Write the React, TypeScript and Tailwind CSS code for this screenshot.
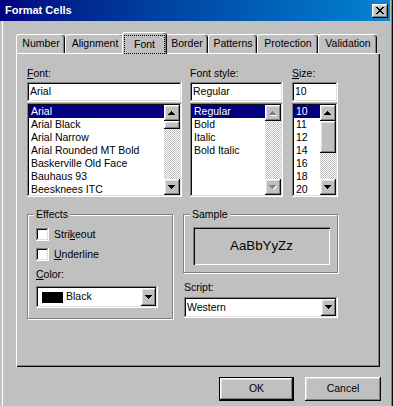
import React from "react";

// Win98 bevels
const RAISED =
  "shadow-[inset_-1px_-1px_#0a0a0a,inset_1px_1px_#ffffff,inset_-2px_-2px_#808080,inset_2px_2px_#dfdfdf]";
const SUNKEN =
  "shadow-[inset_-1px_-1px_#ffffff,inset_1px_1px_#808080,inset_-2px_-2px_#dfdfdf,inset_2px_2px_#0a0a0a]";
const CHECKER =
  "bg-[image:repeating-conic-gradient(#c0c0c0_0%_25%,#ffffff_0%_50%)] bg-[length:2px_2px]";

const UP = "M3 0h1v1h1v1h1v1h1v1H0V3h1V2h1V1h1z";
const DOWN = "M0 0h7v1h-1v1h-1v1h-1v1h-1v-1h-1v-1h-1v-1h-1z";

function Arrow({ down = false, disabled = false }: { down?: boolean; disabled?: boolean }) {
  const d = down ? DOWN : UP;
  return (
    <svg width="8" height="5" viewBox="0 0 8 5" shapeRendering="crispEdges" aria-hidden="true">
      {disabled && <path d={d} fill="#ffffff" transform="translate(1 1)" />}
      <path d={d} fill={disabled ? "#808080" : "#000000"} />
    </svg>
  );
}

/** pixel X used on the caption close button */
const CLOSE_PIXELS: [number, number, number][] = [
  [0, 0, 2], [6, 0, 2],
  [1, 1, 2], [5, 1, 2],
  [2, 2, 4],
  [3, 3, 2],
  [2, 4, 4],
  [1, 5, 2], [5, 5, 2],
  [0, 6, 2], [6, 6, 2],
];

function ScrollBar({ thumb, disabled = false }: { thumb?: string; disabled?: boolean }) {
  return (
    <div className="flex w-[16px] shrink-0 flex-col">
      <div className={`flex h-[16px] shrink-0 items-center justify-center bg-[#c0c0c0] ${RAISED}`}>
        <Arrow disabled={disabled} />
      </div>
      <div className={`flex-1 ${CHECKER}`}>
        {thumb && <div className={`${thumb} bg-[#c0c0c0] ${RAISED}`} />}
      </div>
      <div className={`flex h-[16px] shrink-0 items-center justify-center bg-[#c0c0c0] ${RAISED}`}>
        <Arrow down disabled={disabled} />
      </div>
    </div>
  );
}

function TextBox({ value }: { value: string }) {
  return (
    <div className={`flex h-[20px] items-center bg-white pl-[3px] ${SUNKEN}`}>{value}</div>
  );
}

function ListBox({ items, thumb, disabled }: { items: string[]; thumb?: string; disabled?: boolean }) {
  return (
    <div className={`mt-px flex h-[94px] bg-white p-[2px] ${SUNKEN}`}>
      <div className="min-w-0 flex-1 overflow-hidden">
        {items.map((t, i) => (
          <div
            key={t}
            className={`h-[13px] whitespace-nowrap pl-[2px] leading-[13px] ${
              i === 0 ? "bg-[#000080] text-white" : ""
            }`}
          >
            {t}
          </div>
        ))}
      </div>
      <ScrollBar thumb={thumb} disabled={disabled} />
    </div>
  );
}

function Combo({ className, children }: { className: string; children: React.ReactNode }) {
  return (
    <div className={`flex items-stretch bg-white p-[2px] ${SUNKEN} ${className}`}>
      <div className="flex flex-1 items-center">{children}</div>
      <div className={`flex w-[15px] items-center justify-center bg-[#c0c0c0] ${RAISED}`}>
        <Arrow down />
      </div>
    </div>
  );
}

function Group({ label, className, children }: { label: string; className: string; children?: React.ReactNode }) {
  return (
    <div className={`relative border border-[#808080] shadow-[inset_1px_1px_#ffffff,1px_1px_#ffffff] ${className}`}>
      <span className="absolute -top-[8px] left-[6px] bg-[#c0c0c0] px-[2px] leading-[14px]">{label}</span>
      {children}
    </div>
  );
}

function Label({ children }: { children: React.ReactNode }) {
  return <div className="h-[14px] leading-[14px]">{children}</div>;
}

function Check({ children }: { children: React.ReactNode }) {
  return (
    <div className="flex h-[13px] items-center">
      <div className={`h-[13px] w-[13px] shrink-0 bg-white ${SUNKEN}`} />
      <span className="ml-[5px] leading-[13px]">{children}</span>
    </div>
  );
}

const TABS: { label: string; w: string }[] = [
  { label: "Number", w: "w-[49px]" },
  { label: "Alignment", w: "w-[59px]" },
  { label: "Font", w: "w-[45px]" },
  { label: "Border", w: "w-[43px]" },
  { label: "Patterns", w: "w-[49px]" },
  { label: "Protection", w: "w-[61px]" },
  { label: "Validation", w: "w-[59px]" },
];

export default function App() {
  return (
    <div className="flex h-[406px] w-[393px] flex-col overflow-hidden border-r border-r-[#0a0a0a] bg-[#c0c0c0] font-['Liberation_Sans',Arial,sans-serif] text-[10.5px] text-black">
      <div className="flex h-full flex-col border-r border-r-[#808080]">
        {/* caption */}
        <div className="flex h-[21px] w-[390px] shrink-0 items-center bg-linear-to-r from-[#000080] to-[#1084d0]">
          <span className="pl-[5px] text-[11px] font-bold text-white">Format Cells</span>
          <div className={`ml-auto mr-[2px] flex h-[14px] w-[16px] items-center justify-center bg-[#c0c0c0] ${RAISED}`}>
            <svg width="8" height="7" viewBox="0 0 8 7" shapeRendering="crispEdges" aria-hidden="true">
              {CLOSE_PIXELS.map(([x, y, w], i) => (
                <rect key={i} x={x} y={y} width={w} height="1" fill="#000" />
              ))}
            </svg>
          </div>
        </div>

        <div className="flex flex-1 flex-col border-l border-l-white ml-[2px]">
          {/* tabs */}
          <div className="ml-[13px] mt-[11px] flex h-[21px] items-end">
            {TABS.map((t) =>
              t.label === "Font" ? (
                <div
                  key={t.label}
                  className={`relative z-10 -mx-[2px] -mb-px flex h-[22px] items-start justify-center rounded-t-[3px] border-l border-t border-l-white border-t-white bg-[#c0c0c0] pt-[2px] shadow-[inset_-1px_0_#0a0a0a,inset_-2px_0_#808080] ${t.w}`}
                >
                  <span className="flex h-[19px] w-[41px] items-center justify-center border border-dotted border-black -ml-px">
                    {t.label}
                  </span>
                </div>
              ) : (
                <div
                  key={t.label}
                  className={`flex h-[19px] items-center justify-center rounded-t-[3px] border-l border-t border-l-white border-t-white shadow-[inset_-1px_0_#0a0a0a,inset_-2px_0_#808080] ${t.w}`}
                >
                  {t.label}
                </div>
              )
            )}
          </div>

          {/* panel */}
          <div className="ml-[13px] h-[314px] w-[364px] pl-[11px] pt-[13px] shadow-[inset_1px_1px_#ffffff,inset_-1px_-1px_#0a0a0a,inset_-2px_-2px_#808080]">
            <div className="flex">
              <div className="w-[155px]">
                <Label>
                  <span className="underline">F</span>ont:
                </Label>
                <div className="mt-[2px]">
                  <TextBox value="Arial" />
                </div>
                <ListBox
                  items={[
                    "Arial",
                    "Arial Black",
                    "Arial Narrow",
                    "Arial Rounded MT Bold",
                    "Baskerville Old Face",
                    "Bauhaus 93",
                    "Beesknees ITC",
                  ]}
                  thumb="h-[8px]"
                />
              </div>
              <div className="ml-[8px] w-[93px]">
                <Label>Font style:</Label>
                <div className="mt-[2px]">
                  <TextBox value="Regular" />
                </div>
                <ListBox items={["Regular", "Bold", "Italic", "Bold Italic"]} disabled />
              </div>
              <div className="ml-[9px] w-[46px]">
                <Label>
                  <span className="underline">S</span>ize:
                </Label>
                <div className="mt-[2px]">
                  <TextBox value="10" />
                </div>
                <ListBox items={["10", "11", "12", "14", "16", "18", "20"]} thumb="h-[32px]" />
              </div>
            </div>

            <div className="mt-[17px] flex">
              <Group label="Effects" className="h-[105px] w-[146px] pl-[8px] pt-[13px]">
                <Check>
                  Stri<span className="underline">k</span>eout
                </Check>
                <div className="mt-[7px]">
                  <Check>
                    <span className="underline">U</span>nderline
                  </Check>
                </div>
                <div className="mt-[6px]">
                  <Label>
                    <span className="underline">C</span>olor:
                  </Label>
                </div>
                <Combo className="mt-[5px] h-[22px] w-[122px]">
                  <span className="ml-[4px] h-[11px] w-[21px] bg-black" />
                  <span className="ml-[3px]">Black</span>
                </Combo>
              </Group>

              <div className="ml-[10px] w-[155px]">
                <Group label="Sample" className="h-[59px] pl-[9px] pt-[12px]">
                  <div className="flex h-[38px] w-[137px] items-center justify-center text-[13.3px] shadow-[inset_1px_1px_#808080,inset_2px_2px_#0a0a0a,inset_-1px_-1px_#ffffff]">
                    AaBbYyZz
                  </div>
                </Group>
                <div className="mt-[7px] pl-px">
                  <Label>Script:</Label>
                </div>
                <Combo className="ml-px mt-[3px] h-[21px] w-[154px]">
                  <span className="ml-[1px]">Western</span>
                </Combo>
              </div>
            </div>
          </div>

          {/* buttons */}
          <div className="mr-[10px] mt-[10px] flex justify-end gap-[11px]">
            <div className="h-[24px] w-[75px] border border-black">
              <div className={`flex h-full w-full items-center justify-center ${RAISED}`}>OK</div>
            </div>
            <div className={`flex h-[24px] w-[76px] items-center justify-center ${RAISED}`}>Cancel</div>
          </div>
        </div>
      </div>
    </div>
  );
}
